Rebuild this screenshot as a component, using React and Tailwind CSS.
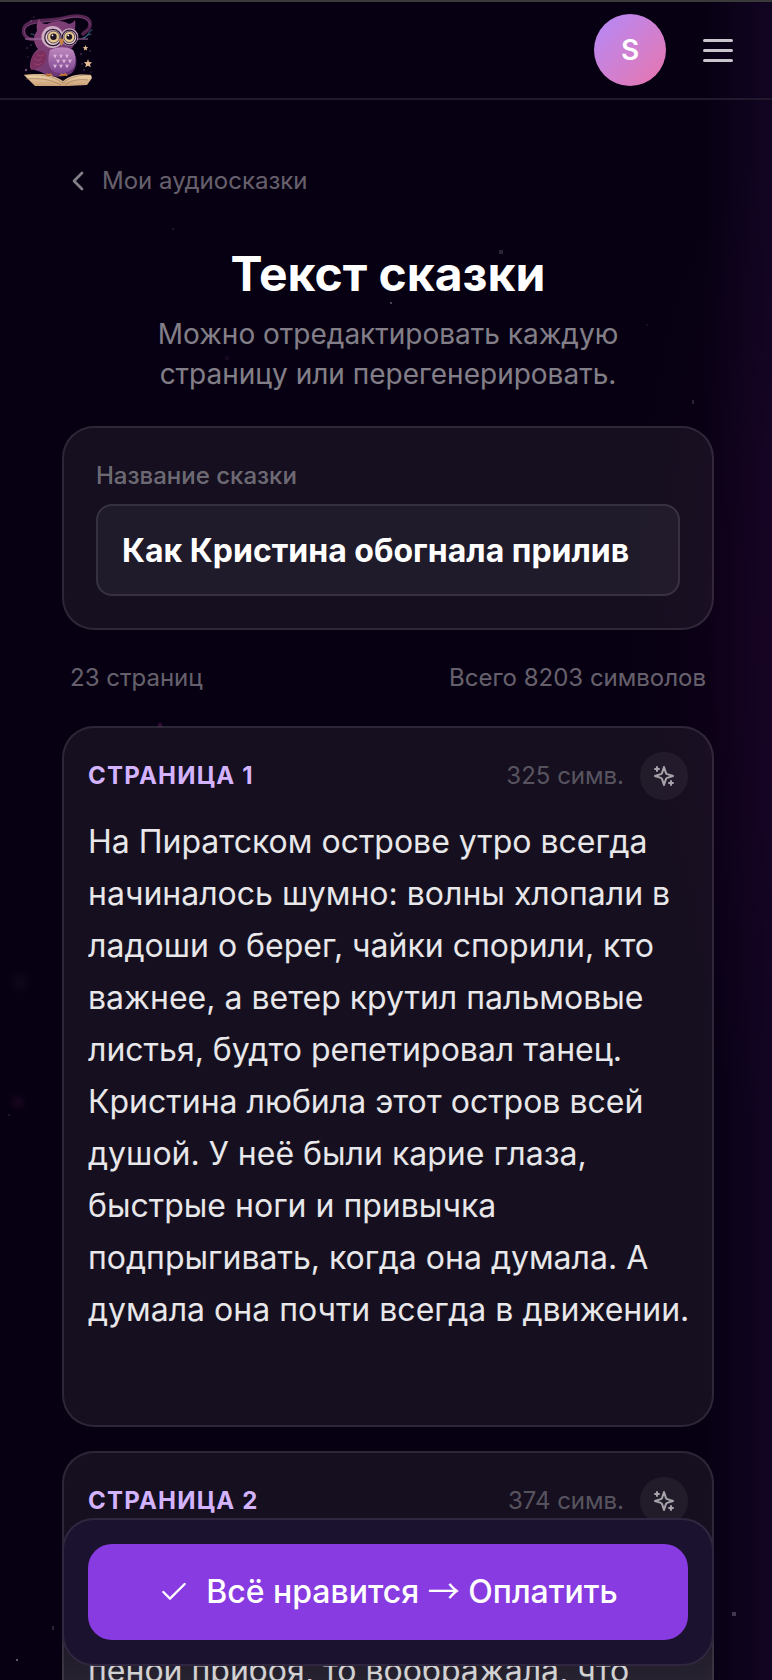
import React from "react";
import { ChevronLeft, Check } from "lucide-react";

const pages = [
  {
    id: 1,
    count: 325,
    text:
      "На Пиратском острове утро всегда начиналось шумно: волны хлопали в ладоши о берег, чайки спорили, кто важнее, а ветер крутил пальмовые листья, будто репетировал танец. Кристина любила этот остров всей душой. У неё были карие глаза, быстрые ноги и привычка подпрыгивать, когда она думала. А думала она почти всегда в движении.",
  },
  {
    id: 2,
    count: 374,
    text:
      "Если Кристина бежала по берегу\nи брызги летели вместе с белой\nпеной прибоя, то воображала, что",
  },
];

const stars = [
  ["left-[499px] top-[250px] size-1", "bg-[#2b2436]"],
  ["left-[172px] top-[228px] size-0.5", "bg-[#1b1628]"],
  ["left-[390px] top-[302px] size-0.5", "bg-[#4a4654]"],
  ["left-[692px] top-[400px] w-0.5 h-1", "bg-[#2b2436]"],
  ["left-[646px] top-[324px] size-0.5", "bg-[#171022]"],
  ["left-[225px] top-[356px] size-1", "bg-[#170720]"],
  ["left-[158px] top-[723px] size-1", "bg-[#2a0a30]"],
  ["left-[12px] top-[974px] size-4 rounded-full blur-[3px]", "bg-[#0d0719]"],
  ["left-[12px] top-[1096px] size-3 rounded-full blur-[3px]", "bg-[#1a0620]"],
  ["left-[8px] top-[1114px] size-0.5", "bg-[#1b1628]"],
  ["left-[52px] top-[1626px] w-0.5 h-1", "bg-[#2b2436]"],
  ["left-[16px] top-[1659px] size-0.5", "bg-[#5b5868]"],
  ["left-[732px] top-[1612px] size-1", "bg-[#3f3950]"],
];

function SparklesIcon() {
  return (
    <svg viewBox="0 0 24 24" className="size-6" fill="none" stroke="currentColor" strokeWidth="2" strokeLinecap="round" strokeLinejoin="round" aria-hidden="true">
      <path d="m12 3-1.912 5.813a2 2 0 0 1-1.275 1.275L3 12l5.813 1.912a2 2 0 0 1 1.275 1.275L12 21l1.912-5.813a2 2 0 0 1 1.275-1.275L21 12l-5.813-1.912a2 2 0 0 1-1.275-1.275L12 3Z" />
      <path d="M5 3v4M19 17v4M3 5h4M17 19h4" />
    </svg>
  );
}

function OwlLogo() {
  return (
    <svg viewBox="0 0 72 72" className="size-[72px]" role="img" aria-label="Сова">
      <defs>
        <linearGradient id="body" x1="0" y1="0" x2="1" y2="1">
          <stop offset="0" stopColor="#8a4377" />
          <stop offset="0.5" stopColor="#7a3d75" />
          <stop offset="1" stopColor="#5f3272" />
        </linearGradient>
        <linearGradient id="belly" x1="0" y1="0" x2="0" y2="1">
          <stop offset="0" stopColor="#c08abf" />
          <stop offset="1" stopColor="#7c4590" />
        </linearGradient>
        <linearGradient id="paper" x1="0" y1="0" x2="0" y2="1">
          <stop offset="0" stopColor="#efd6ac" />
          <stop offset="1" stopColor="#c99f76" />
        </linearGradient>
      </defs>
      <g fill="none" strokeLinecap="round">
        <path d="M14 25C5 27 0 20 2 14 6 4 26 8 42 4 56 0 69 2 68 11c0 6-5 6-7 9" stroke="#532550" strokeWidth="3.500" />
        <path d="M13 26C6 26 0 20 3 14c6-7 24-5 38-9 14-4 26-2 27 6" stroke="#7a4176" strokeWidth="1" />
        <path d="M9 20c3-1 4 4 8 3M70 16c-3 0-3 5-8 8M69 20c-3 0-4 3-8 4" stroke="#3d6f90" strokeWidth="1" />
      </g>
      <path d="M2 61c12-2 28-2 39 6 9-7 18-7 28-6l1 3-5 7-19 1H13Z" fill="url(#paper)" />
      <path d="M2 61c14-1 28 0 39 8 8-7 17-8 28-8M4 65c14-1 24 0 35 6M66 66c-9-1-17 0-23 5" fill="none" stroke="#9b7152" strokeWidth="0.6" />
      <path d="M17 4c1 5 4 6 8 6 8-4 16-4 22 0 3-1 5-2 6-4 1 5 0 9-1 13 3 6 1 12-3 16 6 6 8 16 1 24-7 5-22 5-29 0-6-3-9-3-13-5 0-8 2-14 8-19-5-6-5-13-1-18-1-5 0-9 2-12Z" fill="url(#body)" />
      <path d="M20 36C11 38 8 45 9 56c8-1 17-6 15-17Z" fill="#7b2f5e" />
      <path d="M12 44q4 5 8 0M12 49q4 4 7 0M15 40q4 4 8 0" fill="none" stroke="#97416f" strokeWidth="1" />
      <path d="M28 36c-3 9-2 19 4 22 7 3 16 1 20-5 2-6 2-12-1-17-8-4-16-3-23 0Z" fill="url(#belly)" />
      <g fill="none" stroke="#dcb9dc" strokeWidth="1.300" strokeLinecap="round">
        <path d="m32 41 1 2 1-2m4 0 1 2 1-2m4 0 1 2 1-2M35 46l1 2 1-2m4 0 1 2 1-2m4 0 1 2 1-2M32 51l1 2 1-2m4 0 1 2 1-2m4 0 1 2 1-2" />
      </g>
      <g stroke="#a273a8" strokeWidth="1" fill="none"><path d="M3 25h18M55 25h11" /></g>
      <circle cx="30.500" cy="23" r="11" fill="#cfadc2" />
      <circle cx="47.500" cy="23" r="8.800" fill="#cfadc2" />
      <g fill="#dfc9d0" stroke="#2b1836" strokeWidth="1.200">
        <circle cx="31" cy="23.500" r="8.200" />
        <circle cx="47.500" cy="23.500" r="7.300" />
      </g>
      <g fill="#e3c88f" stroke="#4a2d3d" strokeWidth=".8">
        <circle cx="31.500" cy="23" r="6" />
        <circle cx="47.300" cy="23" r="5.500" />
      </g>
      <g fill="#1f1424"><circle cx="31.500" cy="22.800" r="3.200" /><circle cx="47.300" cy="22.800" r="2.900" /></g>
      <g fill="#fff"><circle cx="30.500" cy="21.300" r=".9" /><circle cx="46.300" cy="21.300" r=".9" /></g>
      <path d="M37 26q2.500-3 5 0-1 4-2.500 6-2-3-2.500-6Z" fill="#c88443" />
      <path d="M24 62q1-4 3-1 2-3 3 1M38 62q1-4 3-1 3-3 4 1" fill="#a9602b" stroke="#d08b42" strokeWidth="1" />
      <g fill="#e6bd97">
        <path d="m66 45 1 3 3 .3-2 2 .7 3-2.700-1.500-2.700 1.500.7-3-2-2 3-.3ZM63.500 31l.7 2 2 .2-1.500 1.300.4 2-1.600-1-1.600 1 .4-2-1.500-1.300 2-.2Z" />
      </g>
      <g fill="#6e4a78">
        <circle cx="9" cy="7" r="1" /><circle cx="5" cy="34" r=".7" /><circle cx="9" cy="31" r=".7" /><circle cx="4" cy="56" r="1.200" /><circle cx="6" cy="43" r=".6" />
        <circle cx="59" cy="40" r=".8" /><circle cx="60" cy="50" r=".7" /><circle cx="68" cy="37" r=".7" /><circle cx="62" cy="56" r=".8" /><circle cx="69" cy="58" r=".6" /><circle cx="12" cy="3" r=".6" />
      </g>
    </svg>
  );
}

function PageCard({ page }) {
  return (
    <article className="rounded-[32px] border-2 border-white/10 bg-white/6 p-6">
      <div className="flex h-12 items-center gap-4">
        <label htmlFor={`page-${page.id}`} className="grow text-2xl font-bold tracking-wider text-[#d3b3fd] uppercase">
          Страница {page.id}
        </label>
        <span className="text-2xl text-white/30">{page.count} симв.</span>
        <button type="button" aria-label="Перегенерировать страницу" className="flex size-12 items-center justify-center rounded-full bg-white/5 text-white/60">
          <SparklesIcon />
        </button>
      </div>
      <textarea
        id={`page-${page.id}`}
        defaultValue={page.text}
        className="mt-4 block h-[585px] w-[calc(100%+12px)] resize-none overflow-hidden bg-transparent text-[32px] leading-[52px] text-white/90 outline-none"
      />
    </article>
  );
}

export default function App() {
  return (
    <div className="relative flex h-dvh flex-col overflow-hidden bg-[#070012] bg-[radial-gradient(ellipse_140px_480px_at_100%_38%,rgba(36,0,40,0.3),transparent),linear-gradient(to_right,transparent_91%,rgba(24,8,44,0.65))] font-['Inter','Noto_Sans',sans-serif] text-white">
      <div aria-hidden="true" className="pointer-events-none absolute inset-0">
        {stars.map(([place, color]) => (
          <span key={place} className={`absolute ${place} ${color}`} />
        ))}
      </div>

      <header className="relative flex h-[100px] shrink-0 items-center justify-between border-t-2 border-b-2 border-t-[#3a3a3a] border-b-[#201a2c] pr-8 pl-[22px]">
        <a href="#home" aria-label="Главная">
          <OwlLogo />
        </a>
        <div className="flex items-center gap-[30px]">
          <button type="button" aria-label="Профиль" className="flex size-[72px] items-center justify-center rounded-full bg-linear-to-br from-[#b388fa] to-[#e873ab] text-[28px] font-semibold">
            S
          </button>
          <button type="button" aria-label="Меню" className="flex h-12 w-11 items-center justify-center">
            <span className="flex w-[30px] flex-col gap-[7px]">
              <span className="h-[3px] rounded-full bg-[#c8c5cc]" />
              <span className="h-[3px] rounded-full bg-[#c8c5cc]" />
              <span className="h-[3px] rounded-full bg-[#c8c5cc]" />
            </span>
          </button>
        </div>
      </header>

      <main className="relative grow overflow-y-auto pt-[61px] pr-[58px] pb-[190px] pl-[62px] [scrollbar-width:none]">
        <a href="#tales" className="flex h-10 items-center gap-2 text-2xl text-white/40">
          <ChevronLeft className="size-8 text-white/50" />
          Мои аудиосказки
        </a>
        <h1 className="mt-[45px] text-center text-5xl leading-[56px] font-bold">Текст сказки</h1>
        <p className="mx-auto mt-3 max-w-[520px] text-center text-[28px] leading-10 text-white/50">
          Можно отредактировать каждую страницу или перегенерировать.
        </p>

        <section className="mt-8 rounded-[32px] border-2 border-white/10 bg-white/6 p-8">
          <label htmlFor="tale-name" className="block text-2xl leading-8 font-medium text-white/40">
            Название сказки
          </label>
          <input
            id="tale-name"
            defaultValue="Как Кристина обогнала прилив"
            className="mt-3 block h-[92px] w-full rounded-2xl border-2 border-white/10 bg-white/5 px-6 text-[32px] font-bold outline-none"
          />
        </section>

        <div className="flex h-24 items-center justify-between px-2 text-2xl text-white/40">
          <span>23 страниц</span>
          <span>Всего 8203 символов</span>
        </div>

        <div className="flex flex-col gap-6">
          {pages.map((page) => (
            <PageCard key={page.id} page={page} />
          ))}
        </div>
      </main>

      <div className="absolute right-[58px] bottom-0 left-[62px] bg-linear-to-t from-[#707070]/20 to-transparent to-50% pb-[14px]">
        <div className="rounded-[32px] border-2 border-[#30263f] bg-[#1a122e] p-6">
          <button type="button" className="flex h-24 w-full items-center justify-center gap-4 rounded-3xl bg-[#883be0] text-[32px] font-medium">
            <Check className="size-8" strokeWidth={1.75} />
            <span>
              Всё нравится <span className="font-['Noto_Sans_CJK_SC',sans-serif] leading-none font-normal">→</span> Оплатить
            </span>
          </button>
        </div>
      </div>
    </div>
  );
}
